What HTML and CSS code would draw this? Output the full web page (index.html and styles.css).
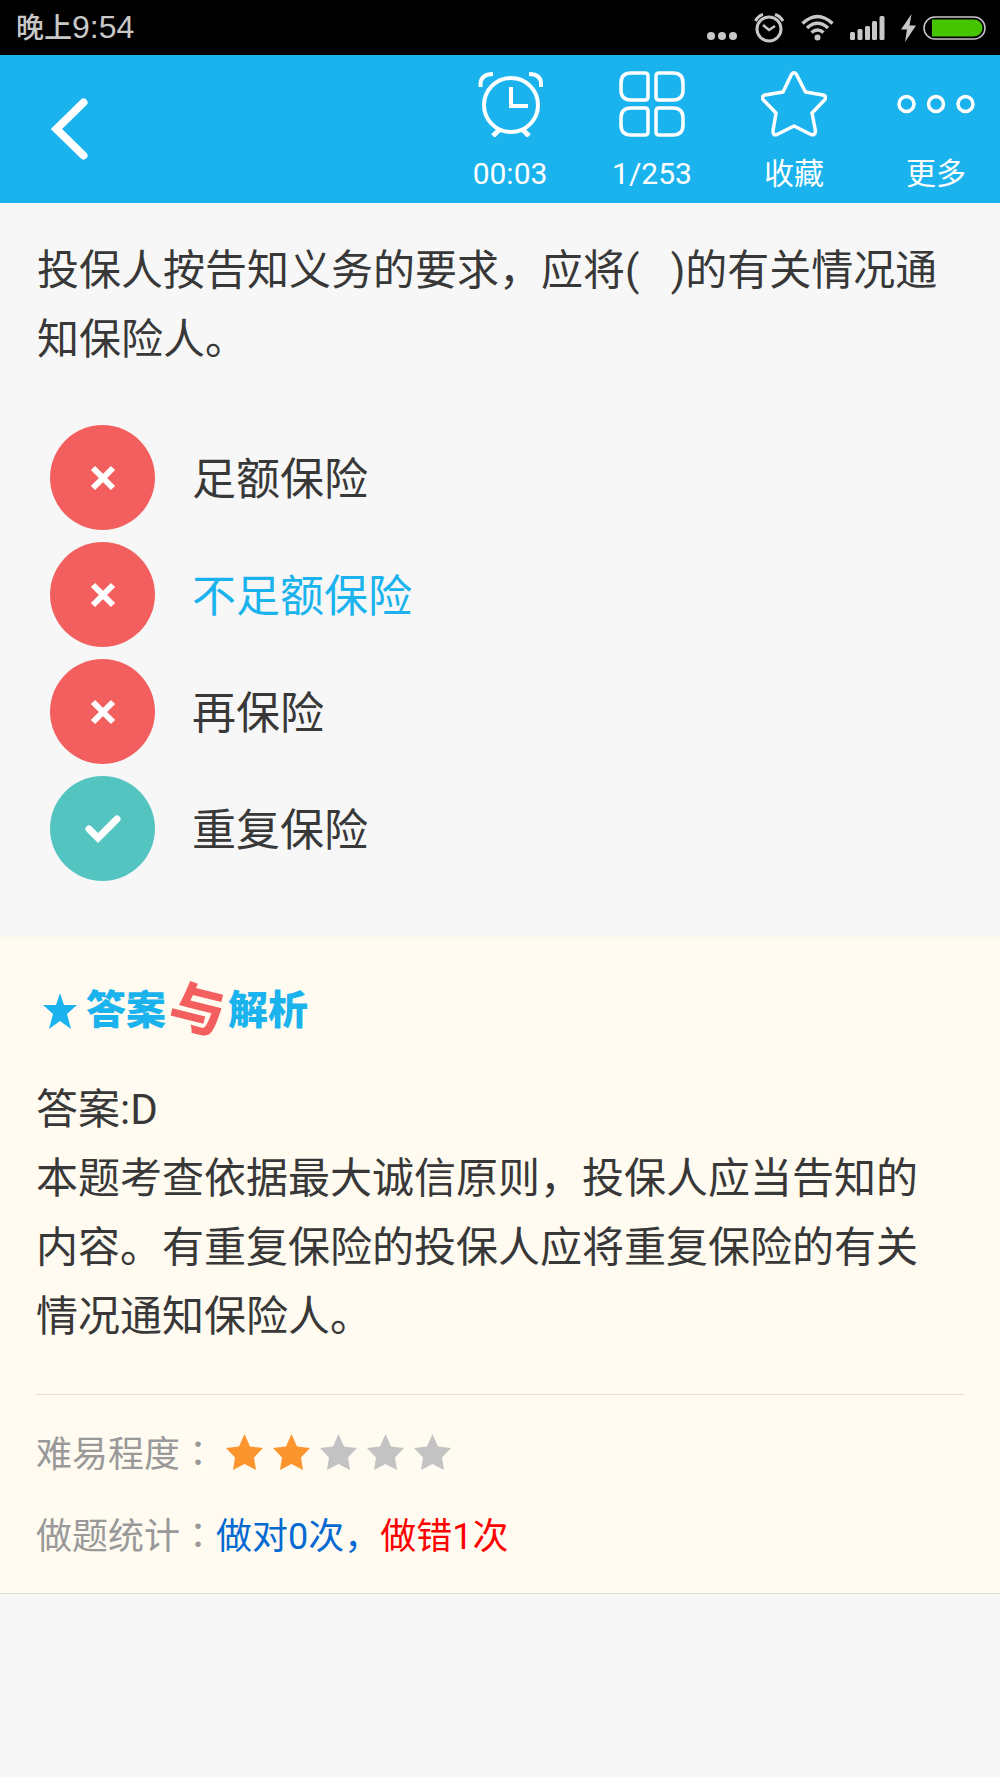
FILE: index.html
```html
<!DOCTYPE html>
<html lang="zh-CN">
<head>
  <meta charset="UTF-8">
  <meta name="viewport" content="width=device-width, initial-scale=1.0">
  <title>答题</title>
  <link rel="stylesheet" href="styles.css">
</head>
<body>
  <div class="status-bar">
    <div class="status-time">晚上<span class="digits">9:54</span></div>
    <div class="status-icons">
      <svg width="31" height="28" viewBox="0 0 31 28" fill="#c8c8c8">
        <circle cx="4" cy="22" r="4"/>
        <circle cx="15" cy="22" r="4"/>
        <circle cx="26" cy="22" r="4"/>
      </svg>
      <svg width="31" height="30" viewBox="0 0 31 30" fill="none" stroke="#c8c8c8" stroke-width="3">
        <circle cx="15" cy="16" r="12"/>
        <path d="M9 12l6 5 6-4" stroke-width="2.5"/>
        <path d="M1.500 8Q4 3 9 1.500M21 1.500Q26 3 29 8"/>
      </svg>
      <svg width="33" height="28" viewBox="0 0 33 28" fill="none" stroke="#c8c8c8" stroke-width="3.500">
        <path d="M1.500 9.500Q16.500-4.500 31.500 9.500M6 14Q16.500 4.500 27 14M10.500 18.500Q16.500 13.500 22.500 18.500"/>
        <circle cx="16.500" cy="23.500" r="3" fill="#c8c8c8" stroke="none"/>
      </svg>
      <svg width="35" height="28" viewBox="0 0 35 28" fill="#c8c8c8">
        <rect x="0" y="18" width="5" height="8" rx="1.500"/>
        <rect x="7.500" y="15" width="5" height="11" rx="1.500"/>
        <rect x="15" y="12" width="5" height="14" rx="1.500"/>
        <rect x="22" y="7" width="5" height="19" rx="1.500"/>
        <rect x="29.500" y="2" width="5" height="24" rx="1.500"/>
      </svg>
      <div class="battery">
        <svg width="15" height="28" viewBox="0 0 15 28" fill="#c8c8c8">
          <path d="M10.500 0L0 15.500h6L4 28 15 11.500H8.500z"/>
        </svg>
        <svg width="63" height="26" viewBox="0 0 63 26">
          <rect x="1" y="2" width="61" height="22" rx="11" fill="none" stroke="#c8c8c8" stroke-width="1.500"/>
          <path d="M9 4.500h42a8.500 8.500 0 0 1 0 17H9z" fill="#46c400"/>
        </svg>
      </div>
    </div>
  </div>

  <header class="header">
    <button class="back" aria-label="返回">
      <svg width="38" height="62" viewBox="0 0 38 62" fill="none" stroke="#fff" stroke-width="8" stroke-linecap="round">
        <path d="M32.500 4.500L5.500 31l27 26.500"/>
      </svg>
    </button>
    <nav class="tools">
      <button class="tool">
        <svg width="66" height="66" viewBox="0 0 66 66" fill="none" stroke="#fff" stroke-width="4">
          <circle cx="34" cy="34" r="27"/>
          <path d="M34 16v19h17"/>
          <path d="M3.500 16V13Q4 3 16 3M64 16V13Q64 3 52 3"/>
          <path d="M23 58l-7 7M45 58l7 7" stroke-width="5"/>
        </svg>
        <span>00:03</span>
      </button>
      <button class="tool">
        <svg width="66" height="66" viewBox="0 0 66 66" fill="none" stroke="#fff" stroke-width="3.500">
          <path d="M12 2h14q3 0 3 3v21q0 3-3 3H12Q2 29 2 19v-7Q2 2 12 2z"/>
          <path d="M54 2H40q-3 0-3 3v21q0 3 3 3h14q10 0 10-10v-7Q64 2 54 2z"/>
          <path d="M12 64h14q3 0 3-3V40q0-3-3-3H12Q2 37 2 47v7q0 10 10 10z"/>
          <path d="M54 64H40q-3 0-3-3V40q0-3 3-3h14q10 0 10 10v7q0 10-10 10z"/>
        </svg>
        <span>1/253</span>
      </button>
      <button class="tool">
        <svg width="66" height="66" viewBox="0 0 66 66" fill="none" stroke="#fff" stroke-width="3.500" stroke-linejoin="round">
          <path d="M30.500 3.500Q33 0 35.500 3.500L44.500 21 62 24Q66.500 25.500 63.500 29L51 42l3.500 18Q54 65 50 63.500L33 55 16 63.500Q12 65 12 60l3-18L2.500 29Q-.500 25.500 4 24l18-3z"/>
        </svg>
        <span>收藏</span>
      </button>
      <button class="tool">
        <svg width="78" height="66" viewBox="0 0 78 66" fill="none" stroke="#fff" stroke-width="3.500">
          <circle cx="9.500" cy="33" r="7.500"/>
          <circle cx="39" cy="33" r="7.500"/>
          <circle cx="68.500" cy="33" r="7.500"/>
        </svg>
        <span>更多</span>
      </button>
    </nav>
  </header>

  <main>
    <section class="question">
      <p class="text">投保人按告知义务的要求，应将(&nbsp;&nbsp;&nbsp;)的有关情况通知保险人。</p>
      <div class="options">
        <button class="option">
          <span class="mark wrong">
            <svg width="26" height="26" viewBox="0 0 26 26" stroke="#fff" stroke-width="6"><path d="M3 3l20 20M23 3L3 23"/></svg>
          </span>
          <span class="option-text">足额保险</span>
        </button>
        <button class="option selected">
          <span class="mark wrong">
            <svg width="26" height="26" viewBox="0 0 26 26" stroke="#fff" stroke-width="6"><path d="M3 3l20 20M23 3L3 23"/></svg>
          </span>
          <span class="option-text">不足额保险</span>
        </button>
        <button class="option">
          <span class="mark wrong">
            <svg width="26" height="26" viewBox="0 0 26 26" stroke="#fff" stroke-width="6"><path d="M3 3l20 20M23 3L3 23"/></svg>
          </span>
          <span class="option-text">再保险</span>
        </button>
        <button class="option">
          <span class="mark right">
            <svg width="36" height="28" viewBox="0 0 36 28" fill="none" stroke="#fff" stroke-width="7" stroke-linecap="round"><path d="M4 14l9 9L32 4"/></svg>
          </span>
          <span class="option-text">重复保险</span>
        </button>
      </div>
    </section>

    <section class="answer">
      <h2 class="answer-title">
        <svg width="34" height="36" viewBox="0 0 34 36" fill="#1ab3ee"><path d="M17 0l4 12h13L24 21l4 15-11-8-11 8 4-15L0 12h13z"/></svg>
        <span>答案</span><span class="and">与</span><span>解析</span>
      </h2>
      <p class="text">答案:D<br>本题考查依据最大诚信原则，投保人应当告知的内容。有重复保险的投保人应将重复保险的有关情况通知保险人。</p>
      <div class="stats">
        <div class="stat">
          <span class="label">难易程度<span class="colon" lang="zh-TW">：</span></span>
          <span class="stars" role="img" aria-label="2 / 5">
            <svg class="star on" viewBox="0 0 37 36"><path d="M18.500 0l5.500 12.500L37 14l-9 9.500L30 36l-11.500-6L7 36l2-12.500L0 14l13-1.500z"/></svg>
            <svg class="star on" viewBox="0 0 37 36"><path d="M18.500 0l5.500 12.500L37 14l-9 9.500L30 36l-11.500-6L7 36l2-12.500L0 14l13-1.500z"/></svg>
            <svg class="star" viewBox="0 0 37 36"><path d="M18.500 0l5.500 12.500L37 14l-9 9.500L30 36l-11.500-6L7 36l2-12.500L0 14l13-1.500z"/></svg>
            <svg class="star" viewBox="0 0 37 36"><path d="M18.500 0l5.500 12.500L37 14l-9 9.500L30 36l-11.500-6L7 36l2-12.500L0 14l13-1.500z"/></svg>
            <svg class="star" viewBox="0 0 37 36"><path d="M18.500 0l5.500 12.500L37 14l-9 9.500L30 36l-11.500-6L7 36l2-12.500L0 14l13-1.500z"/></svg>
          </span>
        </div>
        <div class="stat">
          <span class="label">做题统计<span class="colon" lang="zh-TW">：</span></span>
          <span class="correct">做对0次，</span><span class="incorrect">做错1次</span>
        </div>
      </div>
    </section>
  </main>
</body>
</html>
```
FILE: styles.css
```css
body {
  margin: 0;
  background: #f7f7f7;
  color: #383838;
  font-family: Roboto, "Noto Sans CJK SC", sans-serif;
}

button {
  padding: 0;
  border: 0;
  background: none;
  color: inherit;
  font: inherit;
  cursor: pointer;
}

svg {
  display: block;
  flex: none;
}

.status-bar {
  display: flex;
  align-items: center;
  justify-content: space-between;
  height: 55px;
  padding: 0 14px 0 16px;
  background: #000;
  color: #c8c8c8;
}

.status-time {
  font-size: 28px;
  font-weight: 500;
  line-height: 55px;
}

.digits {
  font-family: "Liberation Sans", sans-serif;
  font-size: 32px;
}

.status-icons {
  display: flex;
  align-items: center;
  gap: 16px;
}

.battery {
  display: flex;
  align-items: center;
  gap: 7px;
}

.header {
  display: flex;
  align-items: center;
  justify-content: space-between;
  height: 148px;
  padding: 0 25px 0 51px;
  background: #1ab3ee;
  color: #fff;
}

.tools {
  display: flex;
  gap: 64px;
  padding-top: 6px;
}

.tool {
  display: flex;
  flex-direction: column;
  align-items: center;
  gap: 17px;
  width: 78px;
  font-size: 30px;
  line-height: 40px;
}

.question {
  padding: 33px 37px 56px;
}

.text {
  margin: 0;
  padding-right: 12px;
  font-size: 42px;
  line-height: 69px;
}

.options {
  display: flex;
  flex-direction: column;
  gap: 12px;
  margin-top: 51px;
  padding-left: 13px;
}

.option {
  display: flex;
  align-items: center;
  gap: 37px;
  font-size: 44px;
  line-height: 64px;
}

.option.selected {
  color: #1ab3ee;
}

.option-text {
  padding-top: 5px;
}

.mark {
  display: flex;
  align-items: center;
  justify-content: center;
  width: 105px;
  height: 105px;
  border-radius: 50%;
}

.mark.wrong {
  background: #f35f5f;
}

.mark.right {
  background: #54c4c0;
}

.answer {
  padding: 40px 36px 15px;
  border-bottom: 1px solid #e0dbd0;
  background: #fffbf0;
}

.answer-title {
  display: flex;
  align-items: center;
  margin: 0 0 30px;
  padding-left: 7px;
  color: #1ab3ee;
  font-size: 40px;
  font-weight: 900;
  line-height: 68px;
}

.answer-title svg {
  margin-right: 9px;
}

.and {
  margin: 0 4px;
  color: #f35f5f;
  font-size: 54px;
  transform: rotate(14deg);
}

.stats {
  margin-top: 43px;
  padding-top: 19px;
  border-top: 1px solid #e4ded2;
}

.stat {
  display: flex;
  align-items: center;
  font-size: 36px;
  line-height: 82px;
}

.label {
  color: #999;
}

.colon {
  font-family: "Noto Sans CJK TC", sans-serif;
  line-height: 1;
}

.stars {
  display: flex;
  gap: 10px;
  margin-left: 10px;
  padding-bottom: 6px;
}

.star {
  width: 37px;
  height: 36px;
  fill: #c3c3c3;
}

.star.on {
  fill: #fc952e;
}

.correct {
  color: #0569d2;
}

.incorrect {
  color: #f00;
}
```
